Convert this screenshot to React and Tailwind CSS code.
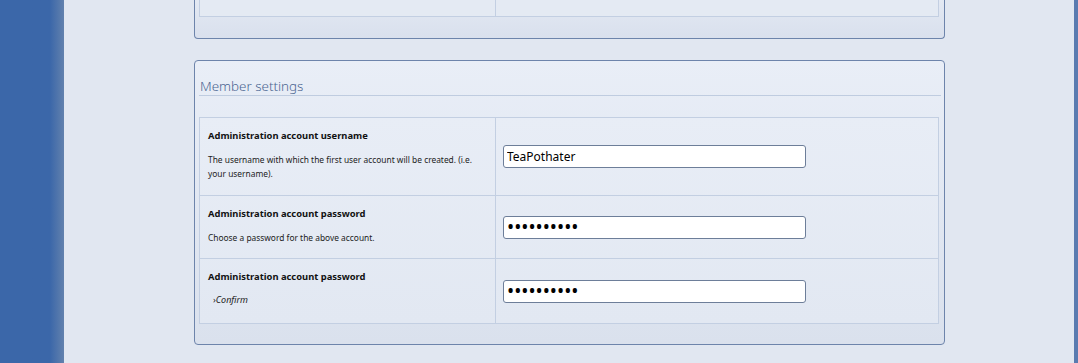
import { useState } from "react";

const rows = [
  {
    title: "Administration account username",
    desc: "The username with which the first user account will be created. (i.e. your username).",
    type: "text",
    value: "TeaPothater",
    height: "h-[78px]",
  },
  {
    title: "Administration account password",
    desc: "Choose a password for the above account.",
    type: "password",
    value: "abcdefghij",
    height: "h-[63px]",
  },
  {
    title: "Administration account password",
    confirm: true,
    type: "password",
    value: "abcdefghij",
    height: "h-[64px]",
    focus: true,
  },
];

function Row({ row, last }) {
  const [value, setValue] = useState(row.value);
  const isPassword = row.type === "password";
  return (
    <div className={`grid grid-cols-[296px_1fr] ${row.height} ${last ? "" : "border-b border-[#c3cfe2]"}`}>
      <div className="border-r border-[#c3cfe2] pl-[8px] pt-[9px]">
        <p className="text-[9.4px] font-bold leading-[18px] text-[#111]">{row.title}</p>
        {row.confirm ? (
          <p className="mt-[7px] pl-[5px] text-[9px] italic leading-[14px] text-[#222]">
            <span className="not-italic">›</span>Confirm
          </p>
        ) : (
          <p className="mt-[8px] pr-[4px] text-[8.4px] leading-[14px] text-[#222]">{row.desc}</p>
        )}
      </div>
      <div className="flex items-center pl-[7px]">
        <input
          type={row.type}
          value={value}
          autoFocus={row.focus}
          onChange={(e) => setValue(e.target.value)}
          className={`h-[23px] w-[303px] rounded-[3px] border border-[#6d7e99] bg-white px-[3px] py-0 text-black caret-black outline-none ${
            isPassword ? "text-[19px] leading-none" : "text-[12px]"
          }`}
        />
      </div>
    </div>
  );
}

export default function App() {
  return (
    <div
      className="flex h-[363px] w-[1078px] overflow-hidden bg-[#e1e7f1] text-[#111]"
      style={{ fontFamily: '"Noto Sans", "Open Sans", sans-serif' }}
    >
      {/* sidebar */}
      <div className="h-full w-[64px] shrink-0 bg-gradient-to-r from-[#3b67a9] from-[78%] to-[#6281ad]" />

      <main className="w-[880px] shrink-0 pl-[130px]">
        {/* previous fieldset, cut off at top */}
        <div className="h-[39px] w-[751px] rounded-b-[4px] border border-t-0 border-[#6d84ab] bg-gradient-to-b from-[#e3e9f3] to-[#d9e0ed] px-[4px]">
          <div className="grid h-[17px] w-[740px] grid-cols-[296px_1fr] border border-t-0 border-[#c3cfe2] bg-[#e4eaf3]">
            <div className="border-r border-[#c3cfe2]" />
            <div />
          </div>
        </div>

        {/* member settings */}
        <section className="mt-[21px] w-[751px] rounded-[4px] border border-[#6d84ab] bg-gradient-to-b from-[#e9eef7] to-[#dae1ed] px-[4px] pb-[20px]">
          <h2 className="mr-[-1px] mt-[16px] border-b border-[#bfcce0] pb-0 pl-[1px] text-[13.4px] font-light leading-[18px] text-[#4a6591]">
            Member settings
          </h2>
          <div className="mt-[21px] w-[740px] border border-[#c3cfe2] bg-gradient-to-b from-[#e8edf6] to-[#e2e8f2]">
            {rows.map((row, i) => (
              <Row key={i} row={row} last={i === rows.length - 1} />
            ))}
          </div>
        </section>
      </main>

      <div className="ml-auto h-full w-[4px] bg-[#5a7bb0]" />
    </div>
  );
}
